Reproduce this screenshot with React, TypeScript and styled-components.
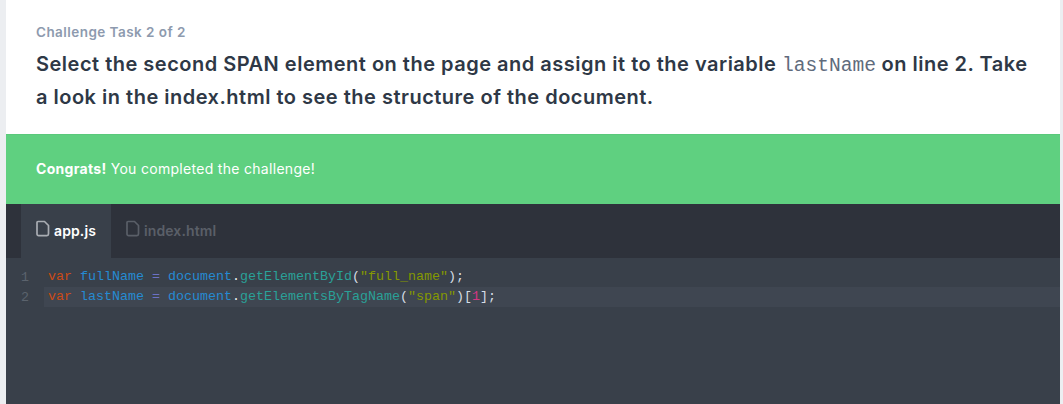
import React from "react";
import styled, { createGlobalStyle } from "styled-components";

const Global = createGlobalStyle`
  html, body { margin: 0; padding: 0; background: #eceef1; overflow: hidden; }
  body { font-family: Inter, "Liberation Sans", sans-serif; }
`;

const Page = styled.div`
  width: 1054px;
  height: 404px;
  margin-left: 6px;
  display: flex;
  flex-direction: column;
  overflow: hidden;
`;

const Prompt = styled.section`
  height: 134px;
  box-sizing: border-box;
  background: #fff;
  padding: 23px 30px 0;
`;

const Eyebrow = styled.div`
  font-size: 13.5px;
  letter-spacing: 0.45px;
  line-height: 18px;
  font-weight: 600;
  color: #8d9aae;
`;

const Question = styled.h2`
  margin: 7px 0 0;
  font-size: 20px;
  letter-spacing: 0.5px;
  line-height: 33px;
  font-weight: 600;
  color: #2e3846;
`;

const InlineCode = styled.code`
  font-family: "Liberation Mono", monospace;
  font-size: 19.6px;
  line-height: 1;
  letter-spacing: 0;
  font-weight: 400;
  color: #5f6b7c;
`;

const Banner = styled.div`
  height: 70px;
  box-sizing: border-box;
  display: flex;
  align-items: center;
  padding: 0 30px 2px;
  background: #5fd080;
  border-top: 1px solid #5ac97b;
  color: #fff;
  font-size: 14px;
  letter-spacing: 0.3px;
`;

const Tabs = styled.div`
  height: 54px;
  display: flex;
  padding-left: 15px;
  background: #2e323b;
`;

const Tab = styled.div<{ $active?: boolean }>`
  width: 90px;
  box-sizing: border-box;
  display: flex;
  align-items: center;
  gap: 4px;
  padding: 0 0 1px 15px;
  background: ${(p) => (p.$active ? "#39404a" : "transparent")};
  color: ${(p) => (p.$active ? "#ffffff" : "#5a5f68")};
  font-size: 14px;
  letter-spacing: 0.1px;
  font-weight: 600;
  & + & { width: 120px; }
`;

const TabIcon = styled.svg`
  margin-top: -5px;
  flex: none;
`;

const Editor = styled.div`
  flex: 1;
  background: #39404a;
  padding-top: 9px;
`;

const Line = styled.div`
  height: 20px;
  display: flex;
  align-items: center;
  font-family: "Liberation Mono", monospace;
  font-size: 13.33px;
  white-space: pre;
`;

const Gutter = styled.span`
  width: 38px;
  box-sizing: border-box;
  padding-left: 15px;
  color: #5b636d;
`;

const Code = styled.span<{ $active?: boolean }>`
  flex: 1;
  height: 20px;
  line-height: 20px;
  padding-left: 4px;
  background: ${(p) => (p.$active ? "#3f4651" : "transparent")};
`;

const T = styled.span<{ $c: string }>`
  color: ${(p) => p.$c};
`;

const c = {
  kw: "#cb4b16",
  v: "#268bd2",
  op: "#6c71c4",
  dot: "#eef0f2",
  fn: "#2aa198",
  str: "#859900",
  p: "#d5dde5",
  num: "#d33682",
};

const FileIcon = ({ color }: { color: string }) => (
  <TabIcon width="14" height="17" viewBox="0 0 14 17" fill="none" stroke={color} strokeWidth="1.7" strokeLinejoin="round">
    <path d="M2 1.5h6.5l4 4v8.5a1.6 1.6 0 0 1-1.6 1.6H2.6A1.6 1.6 0 0 1 1 14V2.5a1 1 0 0 1 1-1z" />
  </TabIcon>
);

export default function App() {
  return (
    <>
      <Global />
      <Page>
        <Prompt>
          <Eyebrow>Challenge Task 2 of 2</Eyebrow>
          <Question>
            Select the second SPAN element on the page and assign it to the variable <InlineCode>lastName</InlineCode> on line 2. Take a look in the index.html to see the structure of the document.
          </Question>
        </Prompt>
        <Banner>
          <span><strong>Congrats!</strong> You completed the challenge!</span>
        </Banner>
        <Tabs>
          <Tab $active><FileIcon color="#a9adb3" />app.js</Tab>
          <Tab><FileIcon color="#5a5f68" />index.html</Tab>
        </Tabs>
        <Editor>
          <Line>
            <Gutter>1</Gutter>
            <Code>
              <T $c={c.kw}>var</T> <T $c={c.v}>fullName</T> <T $c={c.op}>=</T> <T $c={c.v}>document</T><T $c={c.dot}>.</T><T $c={c.fn}>getElementById</T><T $c={c.p}>(</T><T $c={c.str}>"full_name"</T><T $c={c.p}>);</T>
            </Code>
          </Line>
          <Line>
            <Gutter>2</Gutter>
            <Code $active>
              <T $c={c.kw}>var</T> <T $c={c.v}>lastName</T> <T $c={c.op}>=</T> <T $c={c.v}>document</T><T $c={c.dot}>.</T><T $c={c.fn}>getElementsByTagName</T><T $c={c.p}>(</T><T $c={c.str}>"span"</T><T $c={c.p}>)[</T><T $c={c.num}>1</T><T $c={c.p}>];</T>
            </Code>
          </Line>
        </Editor>
      </Page>
    </>
  );
}
